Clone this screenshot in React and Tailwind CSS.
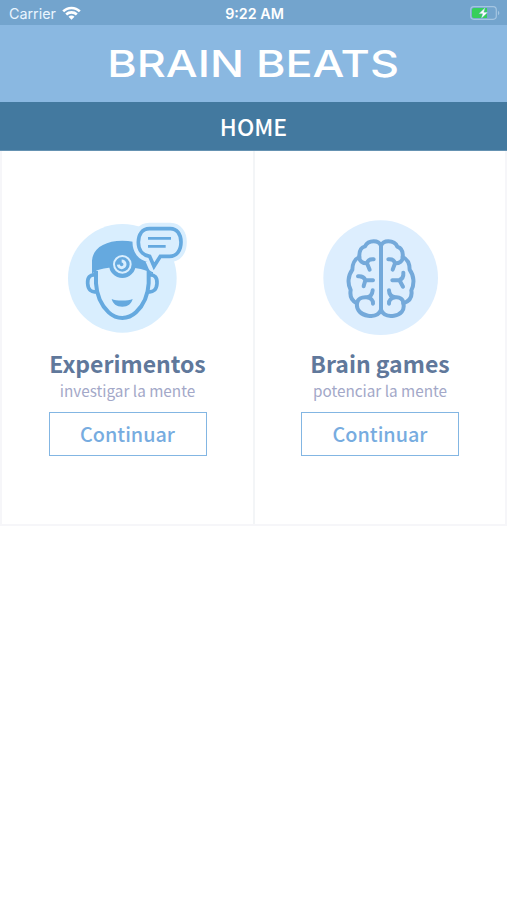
import React from 'react';

const HeadIcon = () => (
  <svg width="135" height="125" viewBox="0 0 405 375" fill="none">
    <circle cx="187" cy="190" r="163" fill="#d9eefe" />
    {/* ears */}
    <path d="M105 180C90 178 82 188 83 205C84 224 94 233 109 230" stroke="#65a9df" strokeWidth="11" />
    <path d="M268 180C284 178 292 188 291 205C290 224 279 233 264 230" stroke="#65a9df" strokeWidth="11" />
    {/* face */}
    <path
      d="M108 168L108 205C110 240 125 272 146 292C160 305 172 309 187 309C202 309 214 305 228 292C249 272 264 240 266 205L266 168"
      stroke="#65a9df"
      strokeWidth="12"
    />
    {/* hair */}
    <path
      d="M96 178L96 137C98 101 133 77 187 77C241 77 277 101 279 137L279 178C263 167 247 162 229 160C212 157 200 156 187 156C168 156 136 158 114 165C106 168 101 172 96 178Z"
      fill="#65a9df"
    />
    <circle cx="187" cy="149" r="40" fill="#65a9df" />
    <circle cx="187" cy="148" r="25" fill="#65a9df" stroke="#d9eefe" strokeWidth="6" />
    <path d="M185 138A10 10 0 1 1 175 149" stroke="#d9eefe" strokeWidth="9" />
    <path d="M155 252C168 258 204 258 218 252C214 267 204 275 187 275C169 275 159 267 155 252Z" fill="#65a9df" />
    {/* speech bubble */}
    <path
      d="M268 41H331C351 41 363 58 363 81C363 107 350 124 329 124H301L282 154L269 124C247 121 235 104 235 82C235 58 247 41 268 41Z"
      fill="#d9eefe"
      stroke="#d9eefe"
      strokeWidth="35"
      strokeLinejoin="round"
    />
    <path
      d="M268 41H331C351 41 363 58 363 81C363 107 350 124 329 124H301L282 154L269 124C247 121 235 104 235 82C235 58 247 41 268 41Z"
      stroke="#65a9df"
      strokeWidth="11"
    />
    <path d="M264 70H333M264 94H317" stroke="#65a9df" strokeWidth="8" />
  </svg>
);

const BrainIcon = () => (
  <svg
    width="130"
    height="125"
    viewBox="0 0 390 375"
    fill="none"
    stroke="#74a9da"
    strokeWidth="12"
    strokeLinecap="round"
    strokeLinejoin="round"
  >
    <circle cx="197" cy="188" r="172" fill="#ddeefe" stroke="none" />
    <path d="M198 92V284" />
    {/* left hemisphere */}
    <path d="M198 92C194 82 186 79 176 79C160 79 154 86 150 94C138 97 132 109 133 126C119 132 112 149 112 164C99 181 97 207 107 225C104 243 110 258 126 265C123 286 139 299 159 302C178 305 192 300 198 284" />
    <path d="M133 126C132 139 145 146 156 145C158 136 165 132 176 133M156 145L164 164" />
    <path d="M129 184C140 183 148 188 151 195C160 196 167 195 174 196M151 195C150 203 147 207 146 214" />
    <path d="M126 265C128 252 140 246 154 247C166 246 172 239 173 226M154 247C168 248 175 256 174 266" />
    {/* right hemisphere */}
    <path d="M198 92C202 82 210 79 220 79C235 79 243 86 247 95C258 99 265 110 263 126C277 132 284 148 284 164C297 181 299 207 289 226C292 243 286 258 265 265C270 286 257 299 237 302C217 305 204 300 198 284" />
    <path d="M263 126C264 139 252 146 240 145C238 136 231 132 220 133M240 145L233 164" />
    <path d="M265 173C266 185 263 192 253 195C245 196 239 195 232 196M253 195L264 215" />
    <path d="M265 265C265 252 254 246 242 247C230 246 222 239 222 226M242 247C228 248 221 256 222 266" />
  </svg>
);

const StatusBar = () => (
  <div className="grid h-[25px] grid-cols-3 items-center bg-[#73a4cd] pt-[3px] pr-[7px] pl-[9px] font-['Inter',sans-serif] text-[14.3px] leading-none text-white">
    <div className="flex items-center gap-[6px]">
      <span className="text-[#eaf5ff]">Carrier</span>
      <svg className="-mt-px" width="19" height="15" viewBox="0 0 19 15" fill="none" stroke="white" strokeWidth="2.6">
        <path d="M1.2 5.4C5.7.8 13.3.8 17.8 5.4M4.2 8.5C7 5.7 12 5.7 14.8 8.5" />
        <path d="M9.5 13.8L6.5 10.8C8.2 9.1 10.8 9.1 12.5 10.8Z" fill="white" stroke="none" />
      </svg>
    </div>
    <span className="text-center font-semibold">9:22 AM</span>
    <svg className="-mt-[3px] justify-self-end" width="30" height="14" viewBox="0 0 30 14" fill="none">
      <rect x="0.7" y="0.7" width="25.6" height="12.6" rx="3.2" stroke="#a5c6e2" strokeWidth="1.2" />
      <path d="M4 2H17V12H4C2.8 12 2 11.2 2 10V4C2 2.8 2.8 2 4 2Z" fill="#35cf5b" />
      <path d="M28 4.8C29.8 5.5 29.8 8.5 28 9.2Z" fill="#a5c6e2" />
      <path d="M15.2 1.6L8.8 7.8H12.6L11.3 12.4L17.8 6.2H13.8Z" fill="white" stroke="#73a4cd" strokeWidth="0.4" />
    </svg>
  </div>
);

const cards = [
  { title: 'Experimentos', subtitle: 'investigar la mente', Icon: HeadIcon },
  { title: 'Brain games', subtitle: 'potenciar la mente', Icon: BrainIcon },
];

const App = () => {
  return (
    <div className="min-h-screen w-full bg-white font-['Noto_Sans_CJK_SC',sans-serif]">
      <StatusBar />
      <header className="flex h-[77px] items-center justify-center bg-[#8ab8e1]">
        <h1 className="origin-center scale-x-[1.215] font-['Inter',sans-serif] text-[37px] leading-none font-medium whitespace-nowrap text-white">
          BRAIN BEATS
        </h1>
      </header>
      <div className="flex h-[49px] items-center justify-center border-b border-[#6592b2] bg-[#43799f]">
        <h2 className="text-[23px] leading-none font-medium text-white">HOME</h2>
      </div>

      <main className="grid h-[375px] grid-cols-[253px_1fr] border-x-2 border-b-2 border-[#f6f6f9]">
        {cards.map(({ title, subtitle, Icon }, index) => (
          <section
            key={title}
            className={`flex flex-col items-center pt-16 ${index === 0 ? 'border-r-2 border-[#f3f5f7]' : ''}`}
          >
            <Icon />
            <h3 className="mt-2 text-[23px] leading-[30px] font-bold text-[#60789b]">{title}</h3>
            <p className="mt-px text-[15.3px] leading-[22px] text-[#a3a8c8]">{subtitle}</p>
            <button className="mt-[11px] h-11 w-[158px] border border-[#83b6e3] text-[19.8px] leading-none font-medium text-[#77ace0]">
              Continuar
            </button>
          </section>
        ))}
      </main>
    </div>
  );
};

export default App;
